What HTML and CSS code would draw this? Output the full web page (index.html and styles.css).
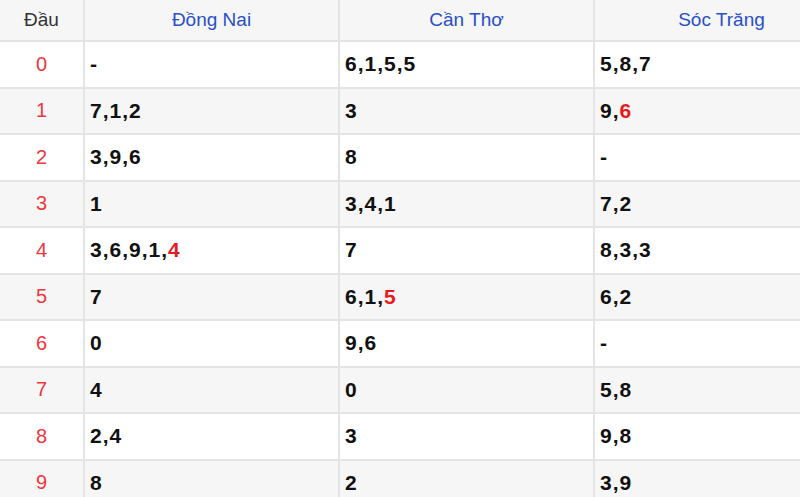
FILE: index.html
```html
<!DOCTYPE html>
<html>
<head>
<meta charset="utf-8">
<link rel="stylesheet" href="styles.css">
</head>
<body>
<div class="frame">
<table class="loto">
  <colgroup>
    <col class="c-head"><col class="c-prov"><col class="c-prov"><col class="c-prov">
  </colgroup>
  <thead>
    <tr><th class="dau">Đầu</th><th>Đồng Nai</th><th>Cần Thơ</th><th>Sóc Trăng</th></tr>
  </thead>
  <tbody>
    <tr><td class="dau">0</td><td>-</td><td>6,1,5,5</td><td>5,8,7</td></tr>
    <tr><td class="dau">1</td><td>7,1,2</td><td>3</td><td>9,<span class="hit">6</span></td></tr>
    <tr><td class="dau">2</td><td>3,9,6</td><td>8</td><td>-</td></tr>
    <tr><td class="dau">3</td><td>1</td><td>3,4,1</td><td>7,2</td></tr>
    <tr><td class="dau">4</td><td>3,6,9,1,<span class="hit">4</span></td><td>7</td><td>8,3,3</td></tr>
    <tr><td class="dau">5</td><td>7</td><td>6,1,<span class="hit">5</span></td><td>6,2</td></tr>
    <tr><td class="dau">6</td><td>0</td><td>9,6</td><td>-</td></tr>
    <tr><td class="dau">7</td><td>4</td><td>0</td><td>5,8</td></tr>
    <tr><td class="dau">8</td><td>2,4</td><td>3</td><td>9,8</td></tr>
    <tr><td class="dau">9</td><td>8</td><td>2</td><td>3,9</td></tr>
  </tbody>
</table>
</div>
</body>
</html>
```
FILE: styles.css
```css
html, body {
  margin: 0;
  padding: 0;
  background: #fff;
}
.frame {
  width: 800px;
  height: 497px;
  overflow: hidden;
  font-family: "Liberation Sans", Arial, sans-serif;
}
.loto {
  border-collapse: collapse;
  table-layout: fixed;
  width: 850px;
}
.c-head { width: 84px; }
.c-prov { width: 255px; }
.loto th, .loto td {
  border-right: 2px solid #e4e4e4;
  border-bottom: 2px solid #e4e4e4;
  padding: 0 0 0 5px;
  text-align: left;
  white-space: nowrap;
}
.loto th {
  height: 40px;
  font-size: 19px;
  font-weight: normal;
  color: #2a4fc6;
  text-align: center;
  padding: 0;
  background: #f6f6f6;
}
.loto th.dau { color: #333; }
.loto td {
  height: 44.5px;
  font-size: 21px;
  font-weight: bold;
  color: #111;
  letter-spacing: 1px;
}
.loto td.dau {
  text-align: center;
  padding: 0;
  font-weight: normal;
  font-size: 20px;
  color: #f0363c;
  letter-spacing: 0;
}
.loto tbody tr:nth-child(even) td { background: #f6f6f6; }
.hit { color: #ea1a1f; }
```
